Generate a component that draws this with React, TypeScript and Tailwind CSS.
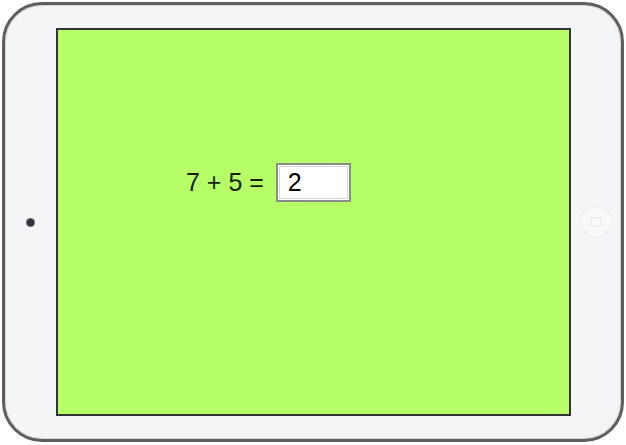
export default function App() {
  return (
    <div className="w-[626px] h-[445px] bg-white p-[2px] font-['Liberation_Sans',Arial,sans-serif]">
      <div className="flex h-[440px] w-[622px] items-stretch rounded-[40px] border-[3px] border-[#5e5e5e] bg-[#f4f5f7] shadow-[inset_0_0_0_1px_#d2d3d5]">
        <div className="flex w-[51px] items-center justify-center">
          <div className="h-[7px] w-[7px] rounded-full bg-[#2f3440] ring-1 ring-[#666]" />
        </div>
        <div className="my-[23px] flex-1 border-2 border-[#333] bg-[#b6ff68]">
          <div className="flex items-center pl-[128px] pt-[133px]">
            <span className="text-[25px] leading-none text-[#0f1f00]">7 + 5 =</span>
            <div className="ml-[12px] h-[39px] w-[75px] border-2 border-[#8a8a8a] bg-white p-[1px]">
              <input
                readOnly
                value="2"
                className="h-full w-full border border-[#d6d6d6] bg-white pl-[8px] text-[25px] leading-none text-black outline-none font-['Liberation_Sans',Arial,sans-serif]"
              />
            </div>
          </div>
        </div>
        <div className="flex w-[50px] items-center justify-center">
          <div className="flex h-[30px] w-[30px] items-center justify-center rounded-full bg-[#f9f9fa] shadow-[0_0_2px_#e0e0e0]">
            <div className="h-[10px] w-[10px] rounded-[3px] border border-[#e6e6e6]" />
          </div>
        </div>
      </div>
    </div>
  );
}
